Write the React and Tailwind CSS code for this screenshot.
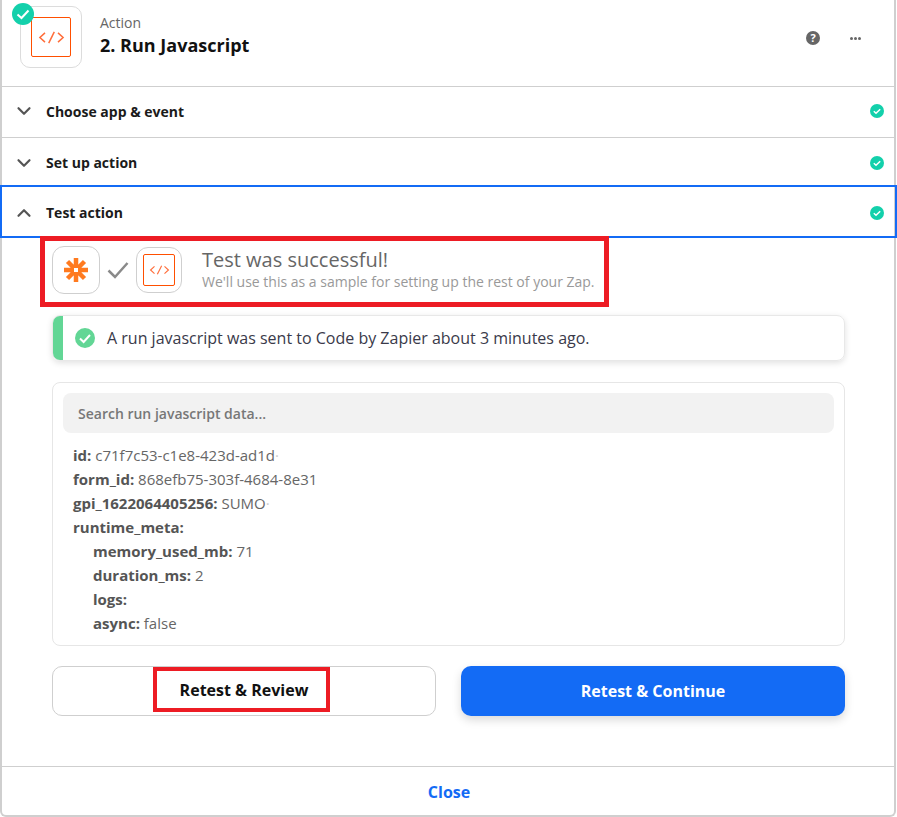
import React from "react";
import { ChevronDown, ChevronUp } from "lucide-react";

const CodeIcon = ({ box, glyph }) => (
  <div className={`${box} border border-[#ff4f00] rounded-[2px] flex items-center justify-center`}>
    <svg viewBox="0 0 28 14" className={glyph} fill="none" stroke="#ff6d3a" strokeWidth="1.6">
      <path d="M7 2 L1.5 7 L7 12" />
      <path d="M11 13 L17 1" />
      <path d="M21 2 L26.5 7 L21 12" />
    </svg>
  </div>
);

const CheckDot = () => (
  <svg viewBox="0 0 14 14" className="w-[14px] h-[14px]">
    <circle cx="7" cy="7" r="7" fill="#13d0ab" />
    <path d="M3.8 7.2 L6 9.2 L10.2 5.2" fill="none" stroke="#fff" strokeWidth="1.5" />
  </svg>
);

const Row = ({ title, open, className = "" }) => (
  <div className={`flex items-center pl-[11px] ${className}`}>
    {open ? (
      <ChevronUp className="w-[22px] h-[22px] text-[#555]" strokeWidth={2.4} />
    ) : (
      <ChevronDown className="w-[22px] h-[22px] text-[#555]" strokeWidth={2.4} />
    )}
    <span className="ml-[11px] text-[14px] font-bold text-[#1b1b1b]">{title}</span>
    <span className="ml-auto flex">
      <CheckDot />
    </span>
  </div>
);

const Field = ({ k, v, indent, faded }) => (
  <div className={`h-[24px] leading-[24px] text-[15px] text-[#666] ${indent ? "pl-[20px]" : ""}`}>
    <span className="font-bold text-[#555]">{k}:</span> {v}
    {faded && <span className="text-[#ccc]">·</span>}
  </div>
);

export default function App() {
  return (
    <div className="w-[897px] h-[817px] bg-white overflow-hidden font-['Open_Sans',sans-serif]">
      <div className="w-[896px] h-[817px] border-x-2 border-b-2 border-[#cfcfcf] rounded-b-[6px] flex flex-col">
        {/* header */}
        <div className="h-[86px] flex items-start shrink-0 pl-[18px] pr-[33px]">
          <div className="relative w-[62px] h-[62px] mt-[6px] border border-[#dcdcdc] rounded-[10px] flex items-center justify-center">
            <CodeIcon box="w-[40px] h-[40px]" glyph="w-[27px] h-[13px]" />
            <div className="absolute -left-[9px] -top-[4px] w-[22px] h-[22px]">
              <svg viewBox="0 0 22 22" className="w-[22px] h-[22px]">
                <circle cx="11" cy="11" r="11" fill="#13d0ab" />
                <path d="M5.5 11.5 L9.5 15 L16.5 7.5" fill="none" stroke="#fff" strokeWidth="2" />
              </svg>
            </div>
          </div>
          <div className="ml-[18px] mt-[14px]">
            <div className="text-[14px] leading-[18px] text-[#666]">Action</div>
            <div className="mt-[1px] text-[18px] leading-[24px] font-bold text-[#111]">2. Run Javascript</div>
          </div>
          <div className="ml-auto mt-[31px] flex items-center">
            <svg viewBox="0 0 14 14" className="w-[14px] h-[14px]">
              <circle cx="7" cy="7" r="7" fill="#666" />
              <text x="7" y="10.8" textAnchor="middle" fontSize="11" fontWeight="700" fill="#fff" fontFamily="Open Sans">?</text>
            </svg>
            <div className="ml-[30px] flex gap-[1px]">
              <span className="w-[3px] h-[3px] bg-[#666] rounded-full" />
              <span className="w-[3px] h-[3px] bg-[#666] rounded-full" />
              <span className="w-[3px] h-[3px] bg-[#666] rounded-full" />
            </div>
          </div>
        </div>

        <Row title="Choose app & event" className="h-[51px] pr-[10px] pb-[2px] border-t border-[#cfcfcf] shrink-0" />
        <Row title="Set up action" className="h-[48px] pr-[10px] pt-[2px] border-t border-[#cfcfcf] shrink-0" />
        <div className="-ml-[2px] w-[897px] border-2 border-[#136bf5] shrink-0">
          <Row title="Test action" open className="h-[49px] pr-[11px] pt-[2px]" />
        </div>

        {/* test result */}
        <div className="relative -mt-[2px] ml-[38px] w-[569px] h-[71px] border-[5px] border-[#ed1c24] flex items-center pl-[7px] pb-[4px] shrink-0">
          <div className="w-[48px] h-[48px] border border-[#cfcfcf] rounded-[12px] flex items-center justify-center">
            <svg viewBox="0 0 26 26" className="w-[26px] h-[26px]" stroke="#ff7a1f" strokeWidth="4.5">
              <path d="M13 1 V25 M1 13 H25 M4.5 4.5 L21.5 21.5 M21.5 4.5 L4.5 21.5" />
              <rect x="11" y="11" width="4" height="4" fill="#fff" stroke="none" />
            </svg>
          </div>
          <svg viewBox="0 0 22 18" className="ml-[7px] w-[22px] h-[18px]" fill="none" stroke="#8a8a8a" strokeWidth="2.5">
            <path d="M1.5 9.5 L8 16 L20.5 2" />
          </svg>
          <div className="ml-[7px] w-[46px] h-[46px] border border-[#cfcfcf] rounded-[12px] flex items-center justify-center">
            <CodeIcon box="w-[32px] h-[32px]" glyph="w-[21px] h-[10px]" />
          </div>
          <div className="ml-[20px]">
            <div className="text-[20px] leading-[24px] text-[#666]">Test was successful!</div>
            <div className="text-[14px] leading-[20px] text-[#999]">We'll use this as a sample for setting up the rest of your Zap.</div>
          </div>
        </div>

        {/* alert */}
        <div className="mt-[8px] ml-[50px] w-[793px] h-[46px] border border-[#e8e8e8] rounded-[8px] shadow-[0_2px_6px_rgba(0,0,0,0.12)] flex items-center overflow-hidden shrink-0">
          <div className="w-[10px] h-full bg-[#62d695]" />
          <svg viewBox="0 0 20 20" className="ml-[12px] w-[20px] h-[20px]">
            <circle cx="10" cy="10" r="10" fill="#62d695" />
            <path d="M5 10.5 L8.6 14 L15 7" fill="none" stroke="#fff" strokeWidth="2" />
          </svg>
          <span className="ml-[12px] text-[16px] text-[#3a3a4a]">A run javascript was sent to Code by Zapier about 3 minutes ago.</span>
        </div>

        {/* data */}
        <div className="mt-[21px] ml-[50px] w-[793px] h-[264px] border border-[#e6e6e6] rounded-[8px] px-[10px] pt-[10px] shrink-0">
          <div className="h-[40px] bg-[#f2f2f2] rounded-[8px] flex items-center pl-[15px] text-[14px] font-semibold text-[#777]">
            Search run javascript data...
          </div>
          <div className="mt-[10px] pl-[10px]">
            <Field k="id" v="c71f7c53-c1e8-423d-ad1d" faded />
            <Field k="form_id" v="868efb75-303f-4684-8e31" />
            <Field k="gpi_1622064405256" v="SUMO" faded />
            <Field k="runtime_meta" v="" />
            <Field k="memory_used_mb" v="71" indent />
            <Field k="duration_ms" v="2" indent />
            <Field k="logs" v="" indent />
            <Field k="async" v="false" indent />
          </div>
        </div>

        {/* buttons */}
        <div className="mt-[20px] ml-[50px] w-[793px] flex gap-[25px] shrink-0">
          <button className="w-[384px] h-[50px] border border-[#cfcfcf] rounded-[10px] flex items-center justify-center">
            <span className="w-[177px] h-[45px] mb-[3px] mr-[6px] pl-[6px] border-[4px] border-[#ed1c24] flex items-center justify-center text-[16px] font-bold text-[#111]">
              Retest & Review
            </span>
          </button>
          <button className="w-[384px] h-[50px] bg-[#136bf5] rounded-[10px] text-white text-[16px] font-bold shadow-[0_4px_10px_rgba(0,0,0,0.15)]">
            Retest & Continue
          </button>
        </div>

        {/* footer */}
        <div className="mt-[50px] flex-1 border-t border-[#cfcfcf] flex items-center justify-center pl-[2px] pt-[2px] text-[16px] font-bold text-[#136bf5]">
          Close
        </div>
      </div>
    </div>
  );
}
